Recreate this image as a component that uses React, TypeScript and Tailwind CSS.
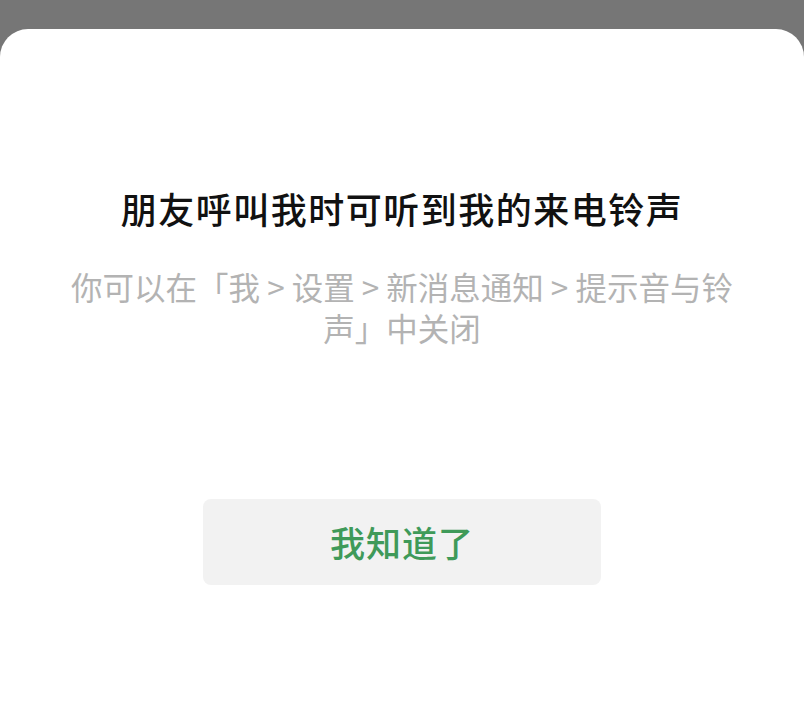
import React from 'react';

export default function App() {
  return (
    <div
      className="h-[704px] w-full bg-[#767676] flex flex-col overflow-hidden"
      style={{ fontFamily: '"Noto Sans CJK SC", "Noto Sans", sans-serif' }}
    >
      <div className="mt-[29px] flex-1 bg-white rounded-t-[28px] flex flex-col items-center">
        <h1 className="mt-[154px] text-[36px] leading-[50px] font-medium tracking-[1.5px] text-[#111111]">
          朋友呼叫我时可听到我的来电铃声
        </h1>
        <p className="mt-[33px] text-center text-[31.5px] leading-[41px] text-[#b3b3b3]">
          你可以在「我 &gt; 设置 &gt; 新消息通知 &gt; 提示音与铃
          <br />
          声」中关闭
        </p>
        <button className="mt-[151px] w-[398px] h-[86px] rounded-[8px] bg-[#f2f2f2] text-[35px] font-medium text-[#3f9a59] tracking-[1px]">
          我知道了
        </button>
      </div>
    </div>
  );
}
